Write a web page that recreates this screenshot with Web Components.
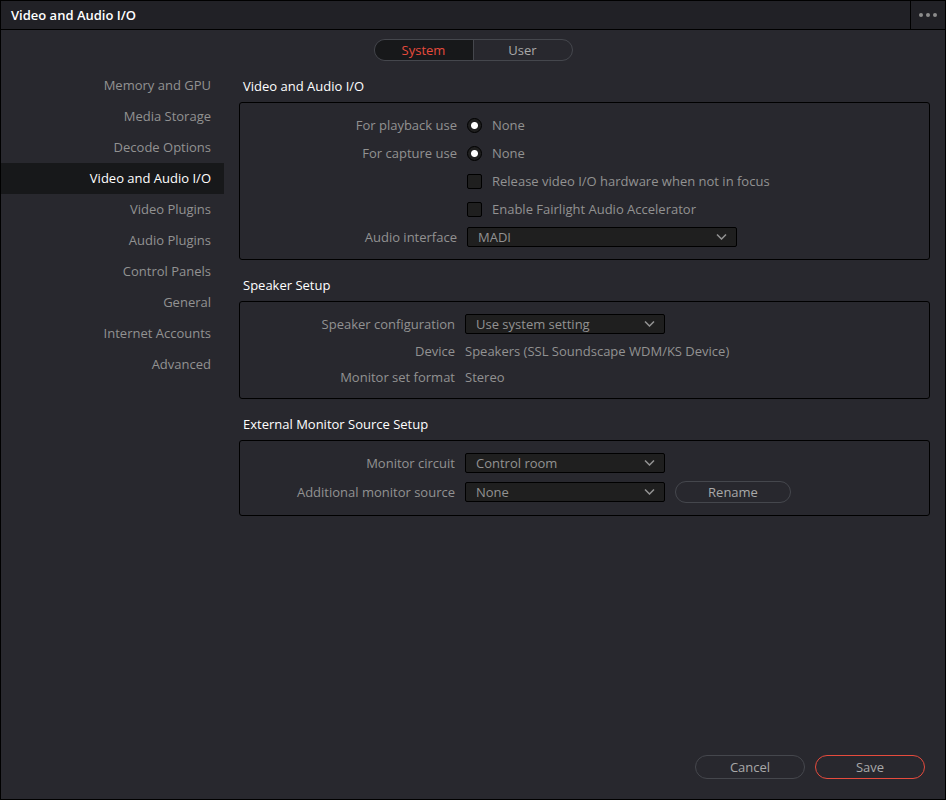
<!DOCTYPE html>
<html lang="en">
<head>
<meta charset="UTF-8">
<meta name="viewport" content="width=device-width, initial-scale=1.0">
<title>Video and Audio I/O</title>
<style>
    :root {
        --bg: #28282e;
        --bar: #212126;
        --field: #1f1f1f;
        --active: #17181a;
        --line: #000;
        --outline: #45474d;
        --text: #929292;
        --button-text: #a9a9a9;
        --bright: #fff;
        --accent: #e64b3d;
    }
    body {
        margin: 0;
        background: var(--bg);
        color: var(--text);
        font: 13px/20px "Open Sans", "Noto Sans", sans-serif;
    }
</style>
</head>
<body>

<prefs-window>
    <title-bar slot="header">Video and Audio I/O</title-bar>
    <tab-switch slot="tabs" tabs="System,User" selected="System"></tab-switch>
    <side-nav slot="nav" selected="Video and Audio I/O"
        items="Memory and GPU,Media Storage,Decode Options,Video and Audio I/O,Video Plugins,Audio Plugins,Control Panels,General,Internet Accounts,Advanced"></side-nav>

    <settings-panel heading="Video and Audio I/O" class="wide">
        <radio-row label="For playback use" option="None"></radio-row>
        <radio-row label="For capture use" option="None"></radio-row>
        <check-row label="Release video I/O hardware when not in focus"></check-row>
        <check-row label="Enable Fairlight Audio Accelerator"></check-row>
        <select-row label="Audio interface" value="MADI"></select-row>
    </settings-panel>

    <settings-panel heading="Speaker Setup">
        <select-row label="Speaker configuration" value="Use system setting"></select-row>
        <value-row label="Device">Speakers (SSL Soundscape WDM/KS Device)</value-row>
        <value-row label="Monitor set format">Stereo</value-row>
    </settings-panel>

    <settings-panel heading="External Monitor Source Setup" class="spaced">
        <select-row label="Monitor circuit" value="Control room"></select-row>
        <select-row label="Additional monitor source" value="None">
            <pill-button>Rename</pill-button>
        </select-row>
    </settings-panel>

    <pill-button slot="footer" class="large">Cancel</pill-button>
    <pill-button slot="footer" class="large primary">Save</pill-button>
</prefs-window>

<script>
class PrefsWindow extends HTMLElement {
    constructor() {
        super();
        this.attachShadow({ mode: 'open' });
    }

    connectedCallback() {
        this.shadowRoot.innerHTML = `
            <style>
                :host {
                    display: flex;
                    flex-direction: column;
                    box-sizing: border-box;
                    min-height: 100vh;
                    border: 1px solid var(--line);
                    background: var(--bg);
                }
                .tabs {
                    display: flex;
                    justify-content: center;
                    padding: 9px 0;
                }
                .body {
                    flex: 1;
                    display: grid;
                    grid-template-columns: 223px minmax(0, 1fr);
                    gap: 15px;
                    padding-right: 15px;
                }
                main {
                    display: flex;
                    flex-direction: column;
                    gap: 15px;
                    padding-top: 6px;
                }
                footer {
                    display: flex;
                    justify-content: flex-end;
                    gap: 10px;
                    padding: 20px;
                }
            </style>
            <slot name="header"></slot>
            <div class="tabs"><slot name="tabs"></slot></div>
            <div class="body">
                <slot name="nav"></slot>
                <main><slot></slot></main>
            </div>
            <footer><slot name="footer"></slot></footer>
        `;
    }
}

class TitleBar extends HTMLElement {
    constructor() {
        super();
        this.attachShadow({ mode: 'open' });
    }

    connectedCallback() {
        this.shadowRoot.innerHTML = `
            <style>
                :host {
                    display: flex;
                    justify-content: space-between;
                    height: 28px;
                    background: var(--bar);
                    border-bottom: 1px solid var(--line);
                }
                h1 {
                    margin: 0;
                    padding-left: 10px;
                    color: var(--bright);
                    font-size: 13px;
                    font-weight: 600;
                    line-height: 28px;
                }
                button {
                    display: flex;
                    align-items: center;
                    justify-content: center;
                    width: 35px;
                    padding: 0;
                    border: 0;
                    border-left: 1px solid var(--line);
                    background: none;
                    color: #8c8c8c;
                }
            </style>
            <h1><slot></slot></h1>
            <button aria-label="Options">
                <svg width="18" height="4" viewBox="0 0 18 4" fill="currentColor">
                    <circle cx="2" cy="2" r="2"/><circle cx="9" cy="2" r="2"/><circle cx="16" cy="2" r="2"/>
                </svg>
            </button>
        `;
    }
}

class TabSwitch extends HTMLElement {
    constructor() {
        super();
        this.attachShadow({ mode: 'open' });
    }

    connectedCallback() {
        this.render();
    }

    render() {
        const selected = this.getAttribute('selected');
        const tabs = this.getAttribute('tabs').split(',');
        this.shadowRoot.innerHTML = `
            <style>
                :host {
                    display: flex;
                    box-sizing: border-box;
                    height: 22px;
                    border: 1px solid var(--outline);
                    border-radius: 11px;
                    overflow: hidden;
                }
                button {
                    box-sizing: border-box;
                    width: 98px;
                    padding: 0;
                    border: 0;
                    background: none;
                    color: var(--button-text);
                    font: inherit;
                }
                button + button {
                    width: 99px;
                    border-left: 1px solid var(--outline);
                }
                button[aria-pressed="true"] {
                    background: var(--active);
                    color: var(--accent);
                }
            </style>
            ${tabs.map(tab => `<button aria-pressed="${tab === selected}">${tab}</button>`).join('')}
        `;
        this.shadowRoot.querySelectorAll('button').forEach(button => {
            button.addEventListener('click', () => {
                this.setAttribute('selected', button.textContent);
                this.render();
            });
        });
    }
}

class SideNav extends HTMLElement {
    constructor() {
        super();
        this.attachShadow({ mode: 'open' });
    }

    connectedCallback() {
        const selected = this.getAttribute('selected');
        const items = this.getAttribute('items').split(',');
        this.shadowRoot.innerHTML = `
            <style>
                :host {
                    display: block;
                    text-align: right;
                }
                a {
                    display: block;
                    padding-right: 13px;
                    color: inherit;
                    line-height: 31px;
                    text-decoration: none;
                }
                a[aria-current] {
                    background: var(--active);
                    color: var(--bright);
                }
            </style>
            <nav>
                ${items.map(item => `<a href="#" ${item === selected ? 'aria-current="page"' : ''}>${item}</a>`).join('')}
            </nav>
        `;
    }
}

class SettingsPanel extends HTMLElement {
    constructor() {
        super();
        this.attachShadow({ mode: 'open' });
    }

    connectedCallback() {
        this.shadowRoot.innerHTML = `
            <style>
                :host {
                    --label-width: 215px;
                    --select-width: 200px;
                    display: block;
                }
                :host(.wide) {
                    --label-width: 217px;
                    --select-width: 270px;
                }
                h2 {
                    margin: 0 0 6px;
                    padding-left: 4px;
                    color: var(--bright);
                    font-size: 13px;
                    font-weight: 400;
                }
                .box {
                    display: flex;
                    flex-direction: column;
                    padding: 8px 0;
                    border: 1px solid var(--line);
                    border-radius: 3px;
                }
                :host(.spaced) .box {
                    gap: 1px;
                    padding-bottom: 9px;
                }
            </style>
            <h2>${this.getAttribute('heading')}</h2>
            <div class="box"><slot></slot></div>
        `;
    }
}

// Shared by every row: right-aligned label column, then the control
const rowStyle = `
    :host {
        display: grid;
        grid-template-columns: var(--label-width) minmax(0, 1fr);
        column-gap: 10px;
        align-items: center;
        min-height: 28px;
    }
    .label {
        text-align: right;
    }
    .control {
        display: flex;
        align-items: center;
        gap: 10px;
    }
    input {
        appearance: none;
        box-sizing: border-box;
        width: 15px;
        height: 15px;
        margin: 0;
        border: 1px solid var(--line);
        background: var(--field);
    }
`;

class RadioRow extends HTMLElement {
    constructor() {
        super();
        this.attachShadow({ mode: 'open' });
    }

    connectedCallback() {
        const label = this.getAttribute('label');
        this.shadowRoot.innerHTML = `
            <style>
                ${rowStyle}
                input {
                    border-radius: 50%;
                }
                input:checked {
                    background: radial-gradient(circle, #fff 3px, var(--field) 4px);
                }
            </style>
            <span class="label">${label}</span>
            <div class="control" role="radiogroup" aria-label="${label}">
                <input type="radio" id="option" name="option" checked>
                <label for="option">${this.getAttribute('option')}</label>
            </div>
        `;
    }
}

class CheckRow extends HTMLElement {
    constructor() {
        super();
        this.attachShadow({ mode: 'open' });
    }

    connectedCallback() {
        this.shadowRoot.innerHTML = `
            <style>
                ${rowStyle}
                .control {
                    grid-column: 2;
                }
                input {
                    border-radius: 2px;
                }
                input:checked {
                    background: var(--text);
                }
            </style>
            <div class="control">
                <input type="checkbox" id="check">
                <label for="check">${this.getAttribute('label')}</label>
            </div>
        `;
    }
}

class SelectRow extends HTMLElement {
    constructor() {
        super();
        this.attachShadow({ mode: 'open' });
    }

    connectedCallback() {
        this.shadowRoot.innerHTML = `
            <style>
                ${rowStyle}
                .select {
                    display: grid;
                    grid-template-columns: var(--select-width);
                    align-items: center;
                }
                .select > * {
                    grid-area: 1 / 1;
                }
                select {
                    appearance: none;
                    box-sizing: border-box;
                    width: 100%;
                    height: 20px;
                    padding: 0 28px 0 10px;
                    border: 1px solid var(--line);
                    border-radius: 2px;
                    background: var(--field);
                    color: inherit;
                    font: inherit;
                    line-height: 18px;
                }
                svg {
                    justify-self: end;
                    margin-right: 10px;
                    pointer-events: none;
                }
            </style>
            <label class="label" for="select">${this.getAttribute('label')}</label>
            <div class="control">
                <div class="select">
                    <select id="select"><option>${this.getAttribute('value')}</option></select>
                    <svg width="11" height="6" viewBox="0 0 11 6" fill="none" stroke="currentColor" stroke-width="1.5">
                        <path d="M1 .5 5.5 5 10 .5"/>
                    </svg>
                </div>
                <slot></slot>
            </div>
        `;
    }
}

class ValueRow extends HTMLElement {
    constructor() {
        super();
        this.attachShadow({ mode: 'open' });
    }

    connectedCallback() {
        this.shadowRoot.innerHTML = `
            <style>
                ${rowStyle}
                :host {
                    min-height: 26px;
                }
            </style>
            <span class="label">${this.getAttribute('label')}</span>
            <span><slot></slot></span>
        `;
    }
}

class PillButton extends HTMLElement {
    constructor() {
        super();
        this.attachShadow({ mode: 'open' });
    }

    connectedCallback() {
        this.shadowRoot.innerHTML = `
            <style>
                :host {
                    display: block;
                }
                button {
                    box-sizing: border-box;
                    width: 116px;
                    height: 22px;
                    padding: 0;
                    border: 1px solid var(--outline);
                    border-radius: 12px;
                    background: none;
                    color: var(--button-text);
                    font: inherit;
                    display: block;
                }
                :host(.large) button {
                    width: 110px;
                    height: 24px;
                }
                :host(.primary) button {
                    border-color: var(--accent);
                }
            </style>
            <button><slot></slot></button>
        `;
    }
}

customElements.define('prefs-window', PrefsWindow);
customElements.define('title-bar', TitleBar);
customElements.define('tab-switch', TabSwitch);
customElements.define('side-nav', SideNav);
customElements.define('settings-panel', SettingsPanel);
customElements.define('radio-row', RadioRow);
customElements.define('check-row', CheckRow);
customElements.define('select-row', SelectRow);
customElements.define('value-row', ValueRow);
customElements.define('pill-button', PillButton);
</script>
</body>
</html>
